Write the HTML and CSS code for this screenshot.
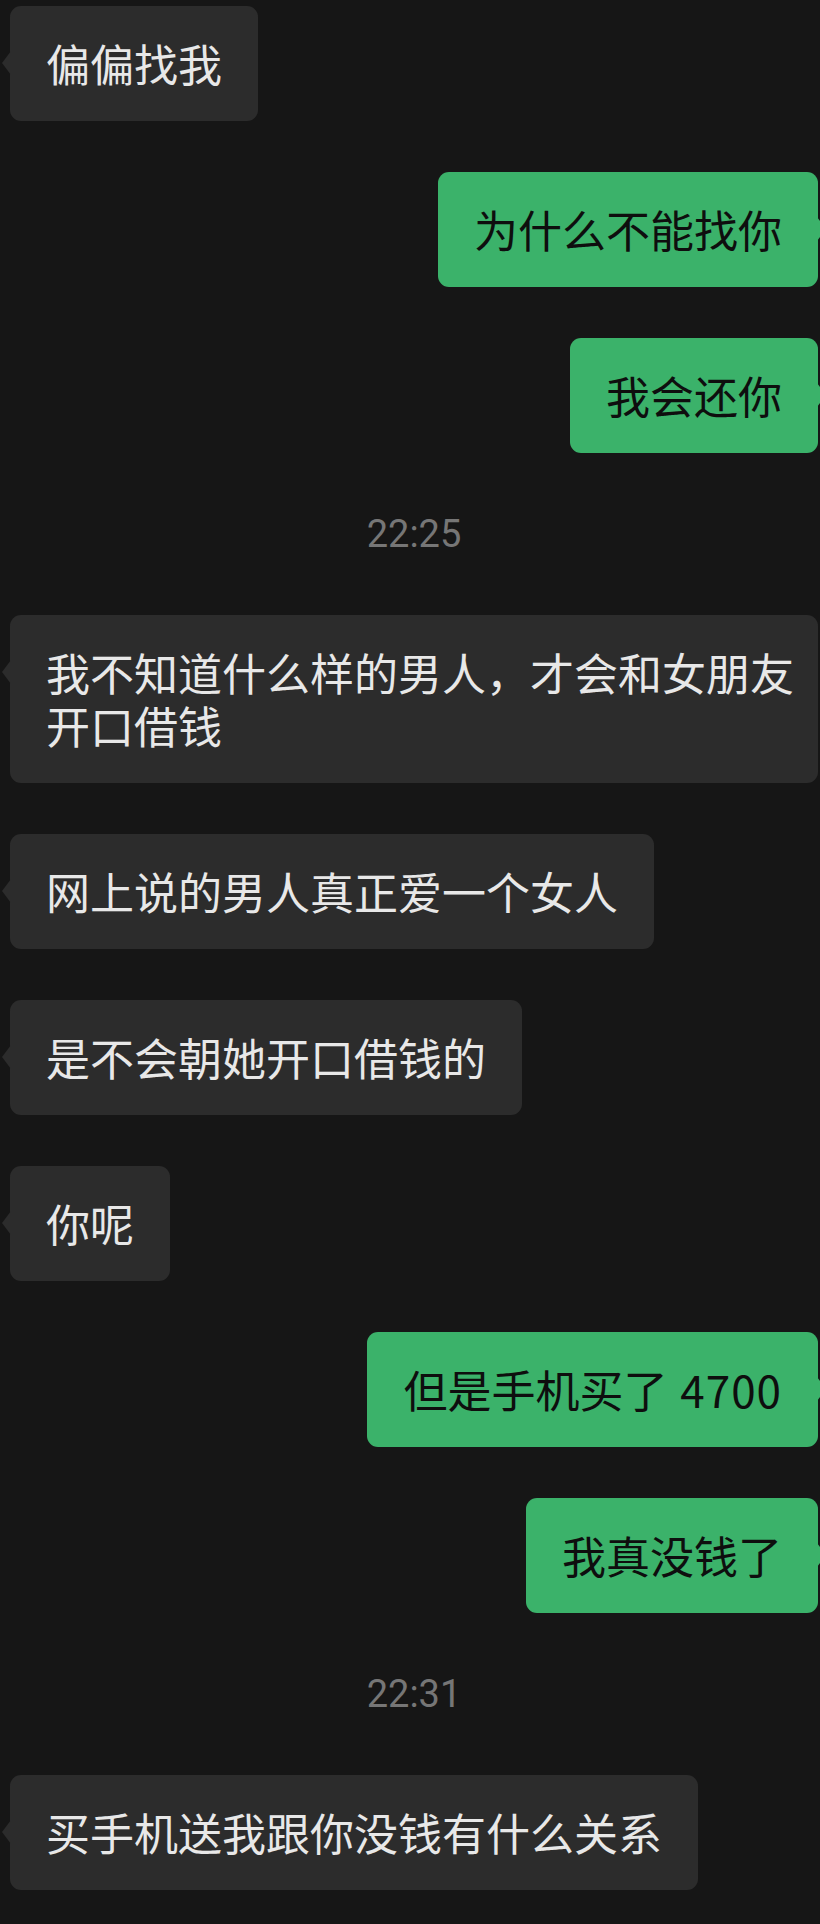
FILE: index.html
```html
<!DOCTYPE html>
<html lang="zh-CN">
<head>
    <meta charset="utf-8">
    <title>聊天记录</title>
    <link rel="stylesheet" href="styles.css">
</head>
<body>
<div class="chat">
    <div class="msg left">偏偏找我</div>
    <div class="msg right">为什么不能找你</div>
    <div class="msg right">我会还你</div>

    <div class="time">22:25</div>

    <div class="msg left wide">我不知道什么样的男人，才会和女朋友开口借钱</div>
    <div class="msg left">网上说的男人真正爱一个女人</div>
    <div class="msg left">是不会朝她开口借钱的</div>
    <div class="msg left">你呢</div>
    <div class="msg right">但是手机买了 <span class="num">4700</span></div>
    <div class="msg right">我真没钱了</div>

    <div class="time">22:31</div>

    <div class="msg left">买手机送我跟你没钱有什么关系</div>
</div>
</body>
</html>
```

FILE: styles.css
```css
* {
    margin: 0;
    padding: 0;
    box-sizing: border-box;
}

html,
body {
    background: #161616;
}

body {
    min-height: 1924px;
    overflow-x: hidden;
    font-family: "Noto Sans CJK SC", "Noto Sans", sans-serif;
}

.chat {
    display: flex;
    flex-direction: column;
    gap: 51px;
    padding: 6px 2px 0 10px;
    overflow: hidden;
}

.msg {
    position: relative;
    padding: 31px 36px;
    border-radius: 11px;
    font-size: 44px;
    line-height: 53px;
}

.msg::before {
    content: "";
    position: absolute;
    top: 45px;
    border-top: 12px solid transparent;
    border-bottom: 12px solid transparent;
}

.left {
    align-self: flex-start;
    background: #2c2c2c;
    color: #e8e8e8;
}

.left::before {
    left: -8px;
    border-right: 9px solid #2c2c2c;
}

.right {
    align-self: flex-end;
    background: #3bb26a;
    color: #0e0e0e;
}

.right::before {
    right: -8px;
    border-left: 9px solid #3bb26a;
}

.wide {
    padding-right: 22px;
}

.num {
    letter-spacing: 1px;
    margin-left: 3px;
}

.time {
    align-self: center;
    margin: 10px 0;
    height: 40px;
    line-height: 40px;
    font-family: Roboto, "Liberation Sans", sans-serif;
    font-size: 38px;
    color: #767676;
}
```
